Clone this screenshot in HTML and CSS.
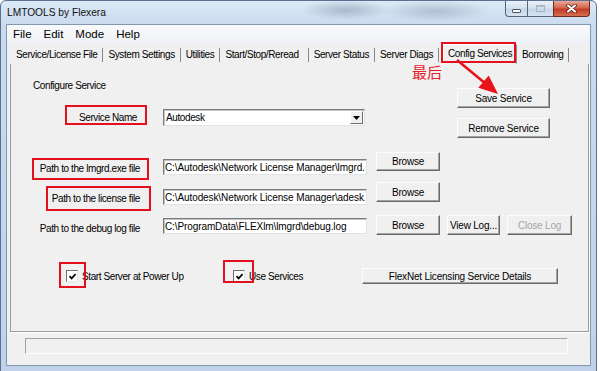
FILE: index.html
```html
<!DOCTYPE html>
<html lang="en">
<head>
  <meta charset="UTF-8" />
  <meta name="viewport" content="width=device-width, initial-scale=1.0"/>
  <title>LMTOOLS by Flexera</title>
  <link rel="stylesheet" href="styles.css">
</head>
<body>
<div class="screen">
  <div class="window">
    <div class="titlebar">
      <span class="title">LMTOOLS by Flexera</span>
      <div class="caption-btns">
        <span class="cbtn cbtn-min"><span class="glyph-min"></span></span>
        <span class="cbtn cbtn-max"><span class="glyph-max"></span></span>
        <span class="cbtn cbtn-close">
          <svg width="11" height="9" viewBox="0 0 11 9">
            <path d="M2 1.5 L9 7.5 M9 1.5 L2 7.5" stroke="#5a2019" stroke-width="3.6" stroke-linecap="round"/>
            <path d="M2 1.5 L9 7.5 M9 1.5 L2 7.5" stroke="#fff" stroke-width="2.1" stroke-linecap="round"/>
          </svg>
        </span>
      </div>
    </div>

    <div class="client">
      <div class="menubar">
        <span>File</span>
        <span>Edit</span>
        <span>Mode</span>
        <span>Help</span>
      </div>

      <div class="tabs">
        <span class="tab">Service/License File</span>
        <span class="tab">System Settings</span>
        <span class="tab">Utilities</span>
        <span class="tab tab-wide">Start/Stop/Reread</span>
        <span class="tab">Server Status</span>
        <span class="tab">Server Diags</span>
        <span class="tab tab-active">Config Services</span>
        <span class="tab">Borrowing</span>
      </div>

      <div class="panel">
        <div class="head">
          <div class="head-left">
            <div class="caption">Configure Service</div>
            <div class="row-service">
              <label class="lbl lbl-service">Service Name</label>
              <div class="combo">
                <span class="combo-text">Autodesk</span>
                <span class="combo-btn">
                  <svg width="7" height="4" viewBox="0 0 7 4"><polygon points="0,0 7,0 3.5,4" fill="#000"/></svg>
                </span>
              </div>
            </div>
          </div>
          <div class="head-right">
            <button class="btn btn-side">Save Service</button>
            <button class="btn btn-side">Remove Service</button>
          </div>
        </div>

        <div class="row row-1">
          <label class="lbl">Path to the lmgrd.exe file</label>
          <input class="field" type="text" value="C:\Autodesk\Network License Manager\lmgrd.exe">
          <button class="btn btn-browse">Browse</button>
        </div>
        <div class="row row-2">
          <label class="lbl">Path to the license file</label>
          <input class="field" type="text" value="C:\Autodesk\Network License Manager\adesk.lic">
          <button class="btn btn-browse">Browse</button>
        </div>
        <div class="row row-3">
          <label class="lbl">Path to the debug log file</label>
          <input class="field" type="text" value="C:\ProgramData\FLEXlm\lmgrd\debug.log">
          <button class="btn btn-browse">Browse</button>
          <button class="btn btn-log">View Log...</button>
          <button class="btn btn-close-log" disabled>Close Log</button>
        </div>

        <div class="checks">
          <label class="check check-power">
            <span class="box"><svg width="9" height="9" viewBox="0 0 9 9"><path d="M1.5 4.2 L3.6 6.4 L7.6 2.2" fill="none" stroke="#000" stroke-width="1.7"/></svg></span>
            Start Server at Power Up
          </label>
          <label class="check check-services">
            <span class="box"><svg width="9" height="9" viewBox="0 0 9 9"><path d="M1.5 4.2 L3.6 6.4 L7.6 2.2" fill="none" stroke="#000" stroke-width="1.7"/></svg></span>
            Use Services
          </label>
          <button class="btn btn-details">FlexNet Licensing Service Details</button>
        </div>
      </div>

      <div class="statusbar"><div class="status-field"></div></div>
    </div>
  </div>

  <!-- red annotations drawn over the dialog -->
  <div class="mark mark-tab"></div>
  <div class="mark mark-service"></div>
  <div class="mark mark-lmgrd"></div>
  <div class="mark mark-license"></div>
  <div class="mark mark-power"></div>
  <div class="mark mark-services"></div>
  <div class="note">最后</div>
  <svg class="arrow" width="55" height="45" viewBox="0 0 55 45">
    <line x1="7" y1="5" x2="36" y2="29" stroke="#e8141c" stroke-width="2.6"/>
    <polygon points="48,39 28.3,32.8 38.7,20.6" fill="#e8141c"/>
  </svg>
</div>
</body>
</html>
```

FILE: styles.css
```css
* {
  box-sizing: border-box;
}
body {
  margin: 0;
  background: #fff;
  font-family: "Liberation Sans", Arial, sans-serif;
  font-size: 10px;
  letter-spacing: -0.4px;
  color: #000;
}
.screen {
  position: relative;
  width: 600px;
  height: 371px;
  overflow: hidden;
}

/* window frame */
.window {
  width: 597px;
  height: 372px;
  display: flex;
  flex-direction: column;
  padding: 0 5px 5px 5px;
  border: 1px solid #5b7191;
  border-radius: 6px 6px 0 0;
  background:
    radial-gradient(ellipse 45px 10px at 345px 9px, rgba(70, 90, 120, 0.3), rgba(70, 90, 120, 0)),
    radial-gradient(ellipse 55px 11px at 435px 10px, rgba(70, 90, 120, 0.25), rgba(70, 90, 120, 0)),
    linear-gradient(to bottom, #dce8f5 0, #cadbee 24px, #bfd2e9 100%);
}
.titlebar {
  height: 23px;
  flex: none;
  display: flex;
  align-items: flex-start;
}
.title {
  font-size: 10.2px;
  letter-spacing: 0;
  line-height: 12px;
  padding: 6px 0 0 1px;
  color: #111;
}
.caption-btns {
  margin-left: auto;
  margin-right: 1px;
  display: flex;
}
.cbtn {
  height: 16px;
  display: flex;
  align-items: center;
  justify-content: center;
  border: 1px solid #56657a;
  border-top: none;
  background: linear-gradient(to bottom, #eaf1f9 0, #d6e2ef 45%, #c5d5e8 55%, #d7e3f0 100%);
}
.cbtn-min {
  width: 22px;
  border-right: none;
  border-radius: 0 0 0 4px;
}
.cbtn-max {
  width: 26px;
  border-right: none;
}
.cbtn-close {
  width: 37px;
  border-color: #6e2a22;
  border-radius: 0 0 4px 0;
  background: linear-gradient(to bottom, #e8a896 0, #d4664f 45%, #c23b27 55%, #d3704f 100%);
}
.glyph-min {
  width: 9px;
  height: 4px;
  margin-top: 5px;
  background: #fff;
  border: 1px solid #4a5566;
  border-radius: 1px;
}
.glyph-max {
  width: 9px;
  height: 7px;
  border: 1px solid #a9b6c6;
  border-top-width: 2px;
}

/* client area */
.client {
  flex: 1;
  display: flex;
  flex-direction: column;
  background: #f0f0f0;
  border: 1px solid #8297b2;
}
.menubar {
  height: 18px;
  flex: none;
  display: flex;
  gap: 12px;
  padding-left: 6px;
  font-size: 11.5px;
  letter-spacing: 0;
  line-height: 18px;
  background: linear-gradient(to bottom, #f9fafc, #eef1f5);
}
.tabs {
  height: 21px;
  flex: none;
  display: flex;
  align-items: flex-start;
  padding-left: 4px;
}
.tab {
  margin-top: 5px;
  height: 14px;
  line-height: 14px;
  padding: 0 5px;
  border-right: 1px solid #868686;
  white-space: nowrap;
}
.tab-wide {
  padding-right: 9px;
}
.tab-active {
  margin: 1px 0 0 4px;
  height: 20px;
  line-height: 18px;
  padding: 0 4px;
  border: 1px solid;
  border-color: #fff #8a8a8a #f0f0f0 #fff;
}

.panel {
  height: 268px;
  flex: none;
  margin: 0 1px 0 3px;
  padding-top: 15px;
  border: 1px solid #9b9b9b;
  border-top: none;
  box-shadow: 1px 1px 0 #fff;
}
.head {
  display: flex;
  height: 59px;
}
.head-left {
  width: 354px;
}
.caption {
  padding-left: 22px;
  line-height: 13px;
}
.row-service {
  display: flex;
  align-items: center;
  margin-top: 17px;
}
.head-right {
  margin-left: 92px;
  padding-top: 9px;
  display: flex;
  flex-direction: column;
  gap: 10px;
}
.lbl {
  flex: none;
  width: 129px;
  margin-right: 23px;
  text-align: right;
  line-height: 13px;
  white-space: nowrap;
}
.lbl-service {
  padding-right: 3px;
}

/* sunken controls */
.combo, .field {
  border: 1px solid;
  border-color: #7a7a7a #e2e2e2 #e2e2e2 #7a7a7a;
  box-shadow: inset 1px 1px 0 #c4c4c4;
  background: #fff;
}
.combo {
  width: 202px;
  height: 17px;
  display: flex;
  align-items: stretch;
  padding: 1px;
}
.combo-text {
  flex: 1;
  padding-left: 1px;
  line-height: 14px;
}
.combo-btn {
  width: 13px;
  display: flex;
  align-items: center;
  justify-content: center;
  background: #f0f0f0;
  border: 1px solid;
  border-color: #fff #6d6d6d #6d6d6d #fff;
}
.field {
  flex: none;
  width: 204px;
  height: 16px;
  padding: 0 1px;
  font: inherit;
  letter-spacing: -0.1px;
  color: #000;
  outline: none;
}

/* raised buttons */
.btn {
  flex: none;
  padding: 0;
  font: inherit;
  letter-spacing: -0.2px;
  color: #000;
  background: #f0f0f0;
  border: 1px solid;
  border-color: #fcfcfc #696969 #696969 #fcfcfc;
  box-shadow: inset -1px -1px 0 #a3a3a3;
  white-space: nowrap;
}
.btn:disabled {
  color: #a6a6a6;
}
.btn-side {
  width: 93px;
  height: 20px;
}
.btn-browse {
  width: 64px;
  height: 20px;
  margin-left: 9px;
}
.btn-log {
  width: 53px;
  height: 20px;
  margin-left: 7px;
}
.btn-close-log {
  width: 65px;
  height: 20px;
  margin-left: 7px;
}

.row {
  display: flex;
  align-items: flex-start;
}
.row-1 {
  margin-top: 14px;
  height: 30px;
}
.row-1 .lbl { margin-top: 10px; }
.row-1 .field { margin-top: 7px; }
.row-1 .btn-browse { height: 19px; }
.row-2 {
  height: 33px;
}
.row-2 .lbl { margin-top: 10px; }
.row-2 .field { margin-top: 7px; }
.row-3 {
  height: 21px;
}
.row-3 .lbl { margin-top: 7px; }
.row-3 .field { margin-top: 3px; }

.checks {
  display: flex;
  align-items: center;
  height: 16px;
  margin-top: 32px;
  padding-left: 55px;
}
.check {
  display: flex;
  align-items: center;
  gap: 4px;
  white-space: nowrap;
}
.check-power {
  width: 167px;
}
.check-services {
  width: 129px;
}
.box {
  width: 12px;
  height: 12px;
  display: flex;
  align-items: center;
  justify-content: center;
  background: #fff;
  border: 1px solid;
  border-color: #6f6f6f #e6e6e6 #e6e6e6 #6f6f6f;
}
.btn-details {
  width: 196px;
  height: 16px;
}

.statusbar {
  flex: 1;
  padding: 6px 0 0 18px;
}
.status-field {
  width: 543px;
  height: 16px;
  border: 1px solid;
  border-color: #a0a0a0 #fff #fff #a0a0a0;
}

/* annotations */
.mark {
  position: absolute;
  border: 2px solid #e3101f;
}
.mark-tab { left: 441px; top: 42px; width: 75px; height: 21px; }
.mark-service { left: 65px; top: 105px; width: 82px; height: 20px; }
.mark-lmgrd { left: 32px; top: 158px; width: 117px; height: 22px; }
.mark-license { left: 46px; top: 186px; width: 105px; height: 25px; }
.mark-power { left: 59px; top: 262px; width: 27px; height: 26px; }
.mark-services { left: 223px; top: 260px; width: 31px; height: 23px; }
.note {
  position: absolute;
  left: 412px;
  top: 63px;
  font-family: "Noto Sans CJK SC", sans-serif;
  font-size: 15px;
  letter-spacing: 0;
  line-height: 18px;
  color: #e8202a;
}
.arrow {
  position: absolute;
  left: 450px;
  top: 55px;
}
```
